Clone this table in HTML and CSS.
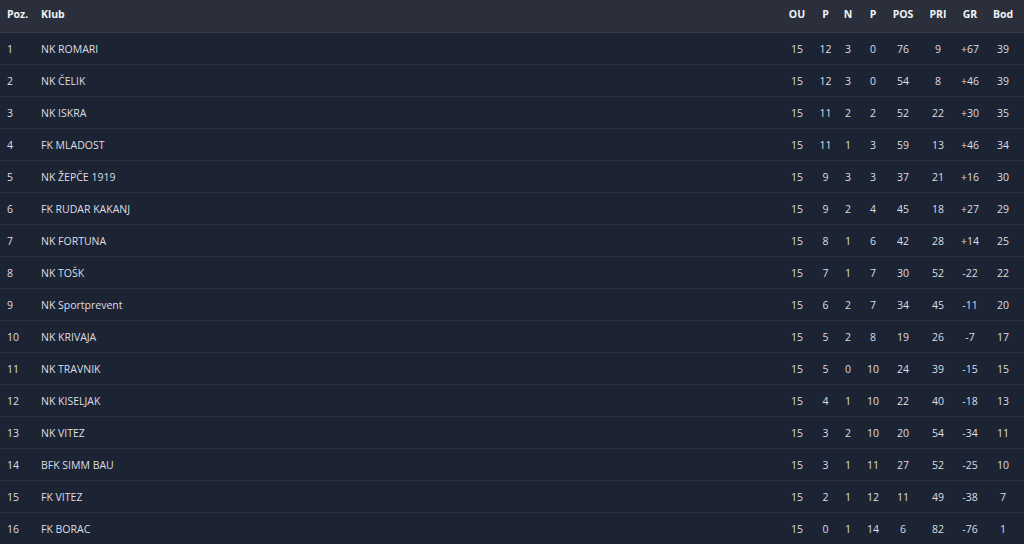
FILE: index.html
```html
<!DOCTYPE html>
<html>
<head>
<meta charset="utf-8">
<link rel="stylesheet" href="styles.css">
</head>
<body>
<div class="table">
  <div class="row head">
    <div class="pos">Poz.</div><div class="club">Klub</div>
    <div class="n">OU</div><div class="n">P</div><div class="n">N</div><div class="n">P</div><div class="n">POS</div><div class="n">PRI</div><div class="n">GR</div><div class="n">Bod</div>
  </div>
  <div class="row"><div class="pos">1</div><div class="club">NK ROMARI</div><div class="n">15</div><div class="n">12</div><div class="n">3</div><div class="n">0</div><div class="n">76</div><div class="n">9</div><div class="n">+67</div><div class="n">39</div></div>
  <div class="row"><div class="pos">2</div><div class="club">NK ČELIK</div><div class="n">15</div><div class="n">12</div><div class="n">3</div><div class="n">0</div><div class="n">54</div><div class="n">8</div><div class="n">+46</div><div class="n">39</div></div>
  <div class="row"><div class="pos">3</div><div class="club">NK ISKRA</div><div class="n">15</div><div class="n">11</div><div class="n">2</div><div class="n">2</div><div class="n">52</div><div class="n">22</div><div class="n">+30</div><div class="n">35</div></div>
  <div class="row"><div class="pos">4</div><div class="club">FK MLADOST</div><div class="n">15</div><div class="n">11</div><div class="n">1</div><div class="n">3</div><div class="n">59</div><div class="n">13</div><div class="n">+46</div><div class="n">34</div></div>
  <div class="row"><div class="pos">5</div><div class="club">NK ŽEPČE 1919</div><div class="n">15</div><div class="n">9</div><div class="n">3</div><div class="n">3</div><div class="n">37</div><div class="n">21</div><div class="n">+16</div><div class="n">30</div></div>
  <div class="row"><div class="pos">6</div><div class="club">FK RUDAR KAKANJ</div><div class="n">15</div><div class="n">9</div><div class="n">2</div><div class="n">4</div><div class="n">45</div><div class="n">18</div><div class="n">+27</div><div class="n">29</div></div>
  <div class="row"><div class="pos">7</div><div class="club">NK FORTUNA</div><div class="n">15</div><div class="n">8</div><div class="n">1</div><div class="n">6</div><div class="n">42</div><div class="n">28</div><div class="n">+14</div><div class="n">25</div></div>
  <div class="row"><div class="pos">8</div><div class="club">NK TOŠK</div><div class="n">15</div><div class="n">7</div><div class="n">1</div><div class="n">7</div><div class="n">30</div><div class="n">52</div><div class="n">-22</div><div class="n">22</div></div>
  <div class="row"><div class="pos">9</div><div class="club">NK Sportprevent</div><div class="n">15</div><div class="n">6</div><div class="n">2</div><div class="n">7</div><div class="n">34</div><div class="n">45</div><div class="n">-11</div><div class="n">20</div></div>
  <div class="row"><div class="pos">10</div><div class="club">NK KRIVAJA</div><div class="n">15</div><div class="n">5</div><div class="n">2</div><div class="n">8</div><div class="n">19</div><div class="n">26</div><div class="n">-7</div><div class="n">17</div></div>
  <div class="row"><div class="pos">11</div><div class="club">NK TRAVNIK</div><div class="n">15</div><div class="n">5</div><div class="n">0</div><div class="n">10</div><div class="n">24</div><div class="n">39</div><div class="n">-15</div><div class="n">15</div></div>
  <div class="row"><div class="pos">12</div><div class="club">NK KISELJAK</div><div class="n">15</div><div class="n">4</div><div class="n">1</div><div class="n">10</div><div class="n">22</div><div class="n">40</div><div class="n">-18</div><div class="n">13</div></div>
  <div class="row"><div class="pos">13</div><div class="club">NK VITEZ</div><div class="n">15</div><div class="n">3</div><div class="n">2</div><div class="n">10</div><div class="n">20</div><div class="n">54</div><div class="n">-34</div><div class="n">11</div></div>
  <div class="row"><div class="pos">14</div><div class="club">BFK SIMM BAU</div><div class="n">15</div><div class="n">3</div><div class="n">1</div><div class="n">11</div><div class="n">27</div><div class="n">52</div><div class="n">-25</div><div class="n">10</div></div>
  <div class="row"><div class="pos">15</div><div class="club">FK VITEZ</div><div class="n">15</div><div class="n">2</div><div class="n">1</div><div class="n">12</div><div class="n">11</div><div class="n">49</div><div class="n">-38</div><div class="n">7</div></div>
  <div class="row"><div class="pos">16</div><div class="club">FK BORAC</div><div class="n">15</div><div class="n">0</div><div class="n">1</div><div class="n">14</div><div class="n">6</div><div class="n">82</div><div class="n">-76</div><div class="n">1</div></div>
</div>
</body>
</html>
```
FILE: styles.css
```css
html, body {
  margin: 0;
  padding: 0;
  background: #1c2333;
}
body {
  font-family: "Open Sans", "Noto Sans", sans-serif;
  font-size: 10.5px;
  color: #dcdfe4;
}
.table {
  width: 1024px;
}
.row {
  display: grid;
  grid-template-columns: 34px 1fr 32px 25px 20px 30px 30px 40px 24px 42px;
  align-items: center;
  height: 31px;
  border-bottom: 1px solid #2a3140;
}
.row.head {
  height: 32px;
  padding-bottom: 0;
  align-items: start;
  line-height: 28px;
  background: #2a2f3b;
  border-bottom: 1px solid #323948;
  font-weight: 700;
  color: #f2f3f5;
}
.pos {
  padding-left: 7px;
}
.club {
  padding-left: 7px;
}
.n {
  text-align: center;
}
```
